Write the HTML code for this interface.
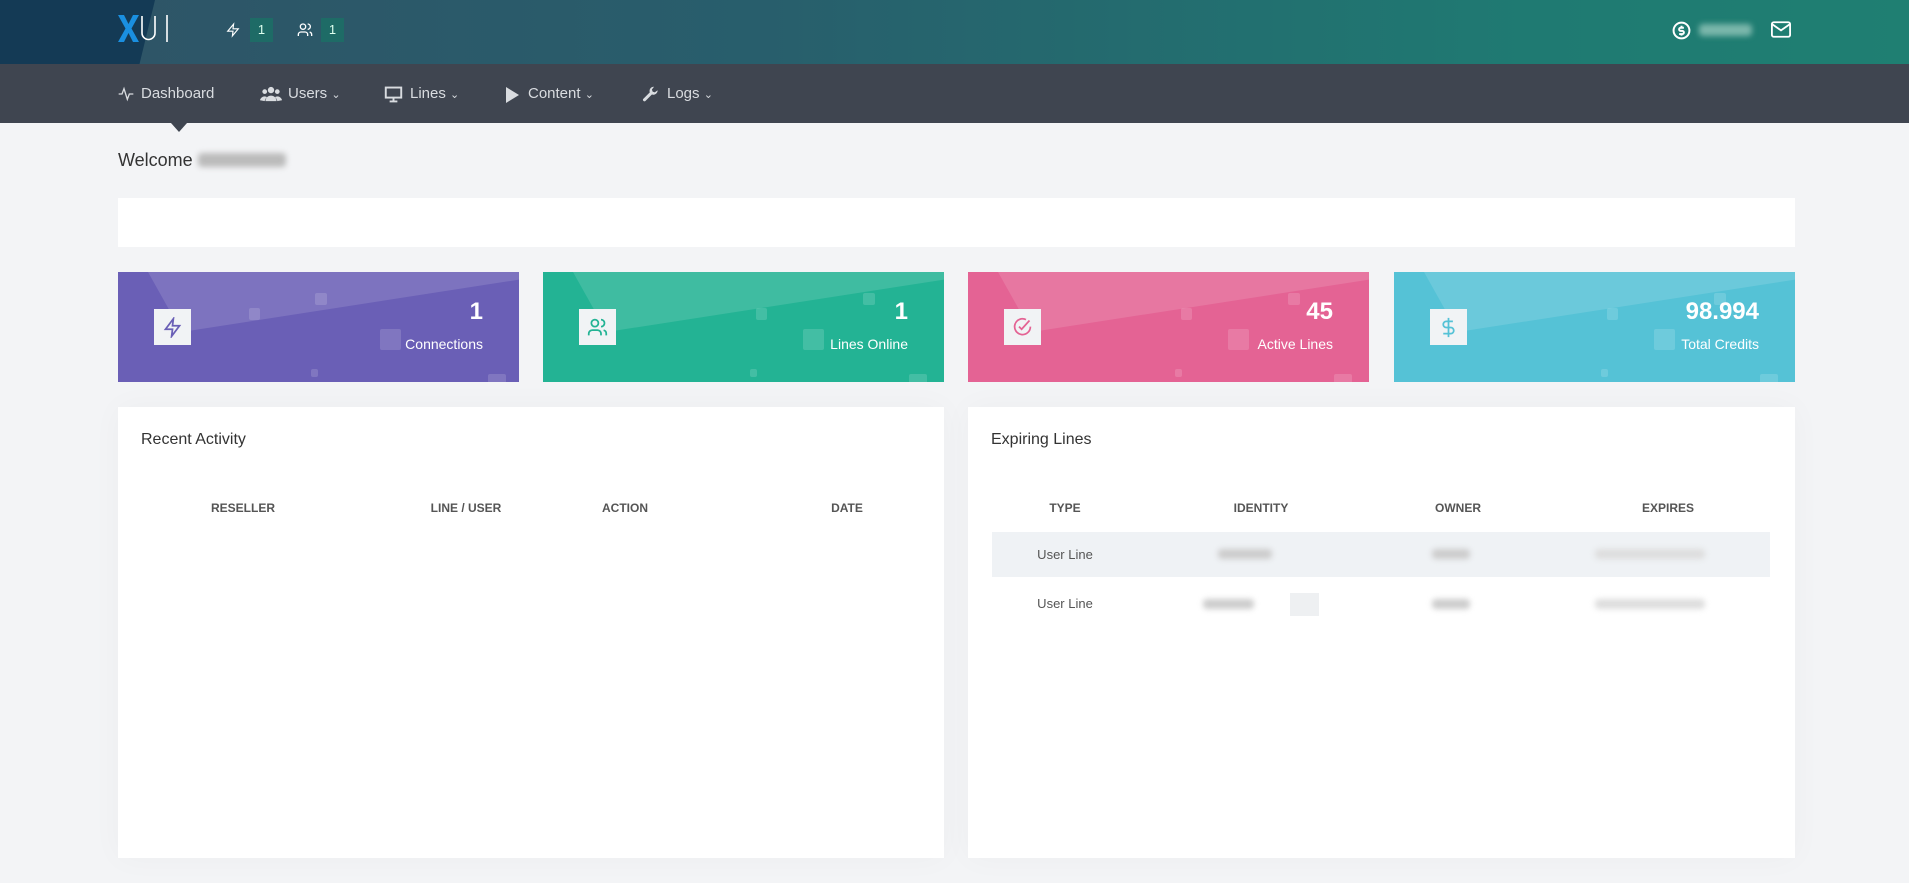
<!DOCTYPE html>
<html><head><meta charset="utf-8">
<style>
*{margin:0;padding:0;box-sizing:border-box}
body{width:1909px;height:883px;overflow:hidden;background:#f3f4f6;font-family:"Liberation Sans",sans-serif;position:relative}
.top{position:absolute;left:0;top:0;width:1909px;height:64px;background:linear-gradient(90deg,#2f5366 0%,#285e6c 40%,#1f7a72 80%,#1f7f72 100%);overflow:hidden}
.top:before{content:"";position:absolute;left:0;top:0;width:155px;height:64px;background:#143a55;clip-path:polygon(0 0,100% 0,90% 100%,0 100%)}
.badge{position:absolute;top:18px;width:23px;height:24px;background:#1e6b66;color:#dfe;font-size:13px;text-align:center;line-height:24px}
.nav{position:absolute;left:0;top:64px;width:1909px;height:59px;background:#3f4550}
.ni{position:absolute;top:21px;color:#d9dce0;font-size:15px}
.ni svg{position:absolute}
.tri{position:absolute;left:171px;top:123px;width:0;height:0;border-left:8px solid transparent;border-right:8px solid transparent;border-top:9px solid #3f4550}
.welcome{position:absolute;left:118px;top:150px;font-size:18px;color:#333}
.blur{display:inline-block;background:#bbb;filter:blur(3px);border-radius:4px}
.bar{position:absolute;left:118px;top:198px;width:1677px;height:49px;background:#fff}
.card{position:absolute;top:272px;width:401px;height:110px;overflow:hidden}
.card .sh{position:absolute;left:30px;top:0;width:420px;height:60px;background:rgba(255,255,255,.13);clip-path:polygon(0 0,100% 0,100% 0,8% 100%)}
.card .sq{position:absolute;background:rgba(255,255,255,.15);border-radius:2px}
.ib{position:absolute;left:36px;top:37px;width:37px;height:36px;background:#f1f3f5}
.ib svg{position:absolute;left:8px;top:8px}
.num{position:absolute;right:36px;top:26px;color:#fff;font-size:24px;font-weight:bold}
.lab{position:absolute;right:36px;top:64px;color:#fff;font-size:14px}
.panel{position:absolute;top:407px;height:451px;background:#fff;box-shadow:0 0 30px rgba(0,0,0,.03)}
.pt{position:absolute;left:23px;top:24px;font-size:16px;color:#333}
.th{position:absolute;top:501px;font-size:12px;font-weight:bold;color:#555;transform:translateX(-50%)}
.td{position:absolute;font-size:13px;color:#555;transform:translateX(-50%)}
</style></head><body>
<div class="top">
<svg style="position:absolute;left:118px;top:15px" width="56" height="27" viewBox="0 0 56 27"><path d="M0 0h6l4.5 9L15 0h6l-7.5 13.5L21 27h-6l-4.5-9L6 27H0l7.5-13.5z" fill="#1a8fe0"/><path d="M24 1v17a6.5 6.5 0 0013 0V1M49 0v27" fill="none" stroke="#fff" stroke-width="1.6"/></svg>
<svg style="position:absolute;left:226px;top:22px" width="14" height="16" viewBox="0 0 24 24" fill="none" stroke="#fff" stroke-width="2"><path d="M13 2L3 14h9l-1 8 10-12h-9z"/></svg>
<div class="badge" style="left:250px">1</div>
<svg style="position:absolute;left:297px;top:22px" width="16" height="16" viewBox="0 0 24 24" fill="none" stroke="#fff" stroke-width="2"><circle cx="9" cy="7" r="4"/><path d="M2 21v-2a4 4 0 014-4h6a4 4 0 014 4v2M16 3a4 4 0 010 8M22 21v-2a4 4 0 00-3-3.9"/></svg>
<div class="badge" style="left:321px">1</div>
<svg style="position:absolute;left:1672px;top:21px" width="19" height="19" viewBox="0 0 24 24" fill="none" stroke="#fff" stroke-width="2.5"><circle cx="12" cy="12" r="10"/><path d="M15 8.5h-4a2 2 0 000 4h2a2 2 0 010 4H9M12 6v2M12 16.5v2"/></svg>
<span class="blur" style="position:absolute;left:1699px;top:24px;width:53px;height:12px;background:#7bb7ab"></span>
<svg style="position:absolute;left:1771px;top:21px" width="20" height="17" viewBox="0 0 22 18" fill="none" stroke="#fff" stroke-width="2"><rect x="1" y="1" width="20" height="16" rx="2"/><path d="M1 3l10 7 10-7"/></svg>
</div>
<div class="nav">
<div class="ni" style="left:118px"><svg style="left:0;top:1px" width="16" height="16" viewBox="0 0 24 24" fill="none" stroke="#d9dce0" stroke-width="2"><path d="M1 12h5l3-8 5 16 3-8h6"/></svg><span style="margin-left:23px">Dashboard</span></div>
<div class="ni" style="left:260px"><svg style="left:0;top:1px" width="22" height="16" viewBox="0 0 28 20" fill="#d9dce0"><circle cx="14" cy="5" r="4"/><circle cx="6" cy="7" r="3"/><circle cx="22" cy="7" r="3"/><path d="M7 19a7 7 0 0114 0zM0 18a6 6 0 016-5 6 6 0 013 1 8 8 0 00-3 5zM28 18a6 6 0 00-6-5 6 6 0 00-3 1 8 8 0 013 5z"/></svg><span style="margin-left:28px">Users <small style="font-size:11px">&#8964;</small></span></div>
<div class="ni" style="left:384px"><svg style="left:0;top:1px" width="19" height="17" viewBox="0 0 24 22" fill="none" stroke="#d9dce0" stroke-width="2.5"><rect x="2" y="2" width="20" height="13"/><path d="M12 15v4M7 20h10"/></svg><span style="margin-left:26px">Lines <small style="font-size:11px">&#8964;</small></span></div>
<div class="ni" style="left:505px"><svg style="left:0;top:1px" width="15" height="18" viewBox="0 0 15 18" fill="#d9dce0"><path d="M1 1l13 8-13 8z"/></svg><span style="margin-left:23px">Content <small style="font-size:11px">&#8964;</small></span></div>
<div class="ni" style="left:642px"><svg style="left:0;top:1px" width="17" height="17" viewBox="0 0 24 24" fill="#d9dce0"><path d="M22 6a6 6 0 01-8 6l-9 9a2 2 0 01-3-3l9-9a6 6 0 016-8l-3 4 1 3 3 1z"/></svg><span style="margin-left:25px">Logs <small style="font-size:11px">&#8964;</small></span></div>
</div>
<div class="tri"></div>
<div class="welcome">Welcome <span class="blur" style="width:88px;height:14px;vertical-align:-1px"></span></div>
<div class="bar"></div>

<div class="card" style="left:118px;background:#6a5fb6"><div class="sh"></div>
<div class="sq" style="left:197px;top:21px;width:12px;height:12px"></div><div class="sq" style="left:131px;top:36px;width:11px;height:12px"></div><div class="sq" style="left:262px;top:57px;width:21px;height:21px"></div><div class="sq" style="left:193px;top:97px;width:7px;height:8px"></div><div class="sq" style="left:370px;top:102px;width:18px;height:10px"></div>
<div class="ib"><svg width="21" height="21" viewBox="0 0 24 24" fill="none" stroke="#6a5fb6" stroke-width="2"><path d="M13 2L4 14h8l-1 8 9-12h-8z"/></svg></div>
<div class="num">1</div><div class="lab">Connections</div></div>

<div class="card" style="left:543px;background:#23b394"><div class="sh"></div>
<div class="sq" style="left:320px;top:21px;width:12px;height:12px"></div><div class="sq" style="left:213px;top:36px;width:11px;height:12px"></div><div class="sq" style="left:260px;top:57px;width:21px;height:21px"></div><div class="sq" style="left:207px;top:97px;width:7px;height:8px"></div><div class="sq" style="left:366px;top:102px;width:18px;height:10px"></div>
<div class="ib"><svg width="21" height="21" viewBox="0 0 24 24" fill="none" stroke="#23b394" stroke-width="2"><circle cx="9" cy="7" r="4"/><path d="M2 21v-2a4 4 0 014-4h6a4 4 0 014 4v2M16 3a4 4 0 010 8M22 21v-2a4 4 0 00-3-3.9"/></svg></div>
<div class="num">1</div><div class="lab">Lines Online</div></div>

<div class="card" style="left:968px;background:#e46394"><div class="sh"></div>
<div class="sq" style="left:320px;top:21px;width:12px;height:12px"></div><div class="sq" style="left:213px;top:36px;width:11px;height:12px"></div><div class="sq" style="left:260px;top:57px;width:21px;height:21px"></div><div class="sq" style="left:207px;top:97px;width:7px;height:8px"></div><div class="sq" style="left:366px;top:102px;width:18px;height:10px"></div>
<div class="ib"><svg width="21" height="21" viewBox="0 0 24 24" fill="none" stroke="#e46394" stroke-width="2"><path d="M21 11a9 9 0 11-5-8"/><path d="M8 11l3 3 9-10"/></svg></div>
<div class="num">45</div><div class="lab">Active Lines</div></div>

<div class="card" style="left:1394px;background:#55c2d6"><div class="sh"></div>
<div class="sq" style="left:320px;top:21px;width:12px;height:12px"></div><div class="sq" style="left:213px;top:36px;width:11px;height:12px"></div><div class="sq" style="left:260px;top:57px;width:21px;height:21px"></div><div class="sq" style="left:207px;top:97px;width:7px;height:8px"></div><div class="sq" style="left:366px;top:102px;width:18px;height:10px"></div>
<div class="ib"><svg width="21" height="21" viewBox="0 0 24 24" fill="none" stroke="#55c2d6" stroke-width="2"><path d="M12 1v22M17 5H9.5a3.5 3.5 0 000 7h5a3.5 3.5 0 010 7H6"/></svg></div>
<div class="num">98.994</div><div class="lab">Total Credits</div></div>

<div class="panel" style="left:118px;width:826px"><div class="pt">Recent Activity</div></div>
<div class="panel" style="left:968px;width:827px"><div class="pt">Expiring Lines</div>
<div style="position:absolute;left:24px;top:125px;width:778px;height:45px;background:#eff2f5"></div></div>

<div class="th" style="left:243px">RESELLER</div>
<div class="th" style="left:466px">LINE / USER</div>
<div class="th" style="left:625px">ACTION</div>
<div class="th" style="left:847px">DATE</div>
<div class="th" style="left:1065px">TYPE</div>
<div class="th" style="left:1261px">IDENTITY</div>
<div class="th" style="left:1458px">OWNER</div>
<div class="th" style="left:1668px">EXPIRES</div>

<div class="td" style="left:1065px;top:547px">User Line</div>
<div class="td" style="left:1065px;top:596px">User Line</div>
<span class="blur" style="position:absolute;left:1218px;top:549px;width:54px;height:10px;background:#ccc"></span>
<span class="blur" style="position:absolute;left:1432px;top:549px;width:38px;height:10px;background:#ccc"></span>
<span class="blur" style="position:absolute;left:1595px;top:549px;width:110px;height:10px;background:#ddd"></span>
<span class="blur" style="position:absolute;left:1203px;top:599px;width:51px;height:10px;background:#ccc"></span>
<div style="position:absolute;left:1290px;top:593px;width:29px;height:23px;background:#eef0f2"></div>
<span class="blur" style="position:absolute;left:1432px;top:599px;width:38px;height:10px;background:#ccc"></span>
<span class="blur" style="position:absolute;left:1595px;top:599px;width:110px;height:10px;background:#ddd"></span>
</body></html>
